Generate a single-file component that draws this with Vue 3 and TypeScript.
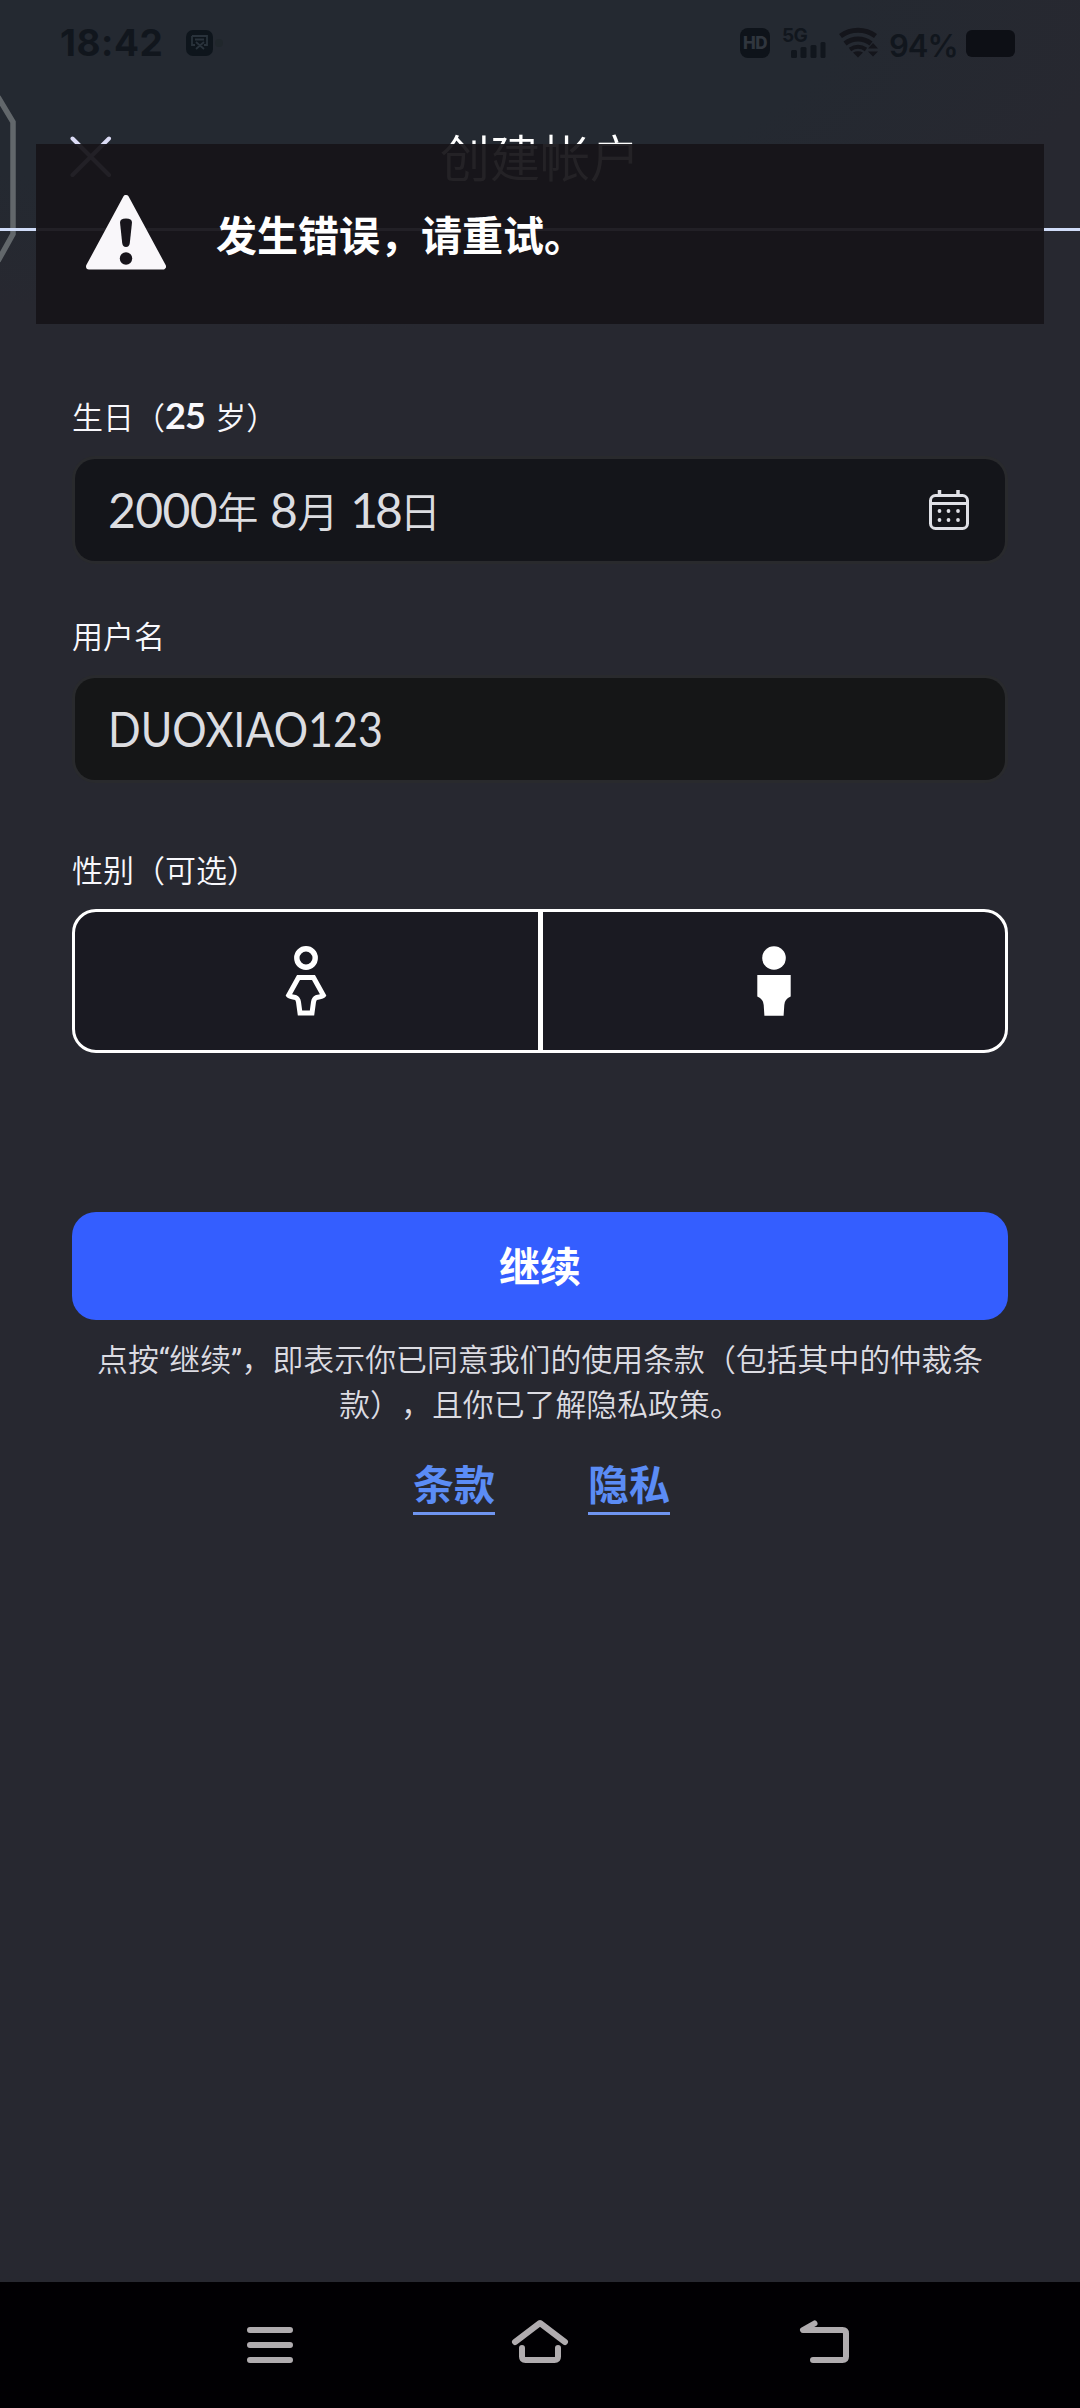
<script setup lang="ts">
import { ref } from 'vue'

type Gender = 'female' | 'male'

const username = ref('DUOXIAO123')
const age = ref(25)
const gender = ref<Gender>('male')
const links: string[] = ['条款', '隐私']
</script>

<template>
  <div class="screen">
    <div class="status">
      <span class="time">18:42</span>
      <svg class="app-badge" width="40" height="28" viewBox="0 0 40 28">
        <rect x="0" y="1" width="27" height="26" rx="7" fill="#0e151c" />
        <path d="M6 7h15v9h-3M6 7v9h3M9 10.5h9M10 20l8-7M18 20l-8-7" fill="none" stroke="#29323b" stroke-width="1.8" />
        <circle cx="33" cy="14" r="4" fill="#20272c" />
      </svg>
      <span class="spacer" />
      <span class="hd">HD</span>
      <span class="signal">
        <span class="net">5G</span>
        <svg width="36" height="16" viewBox="0 0 36 16" fill="#11161d">
          <rect x="0" y="8" width="6" height="8" rx="1.5" />
          <rect x="9.500" y="5" width="6" height="11" rx="1.5" />
          <rect x="19.500" y="3" width="6" height="13" rx="1.5" />
          <rect x="29.500" y="0" width="5" height="16" rx="1.5" />
        </svg>
      </span>
      <svg class="wifi" width="40" height="32" viewBox="0 0 40 32">
        <g fill="none" stroke="#14151b" stroke-width="5">
          <path d="M1.500 9C12 1.200 26 1.200 36.500 9" />
          <path d="M6 16.500C14 10.500 24 10.500 32 16.500" />
          <path d="M11 22.500C16 19 22 19 27 22.500" stroke-width="4" />
        </g>
        <path d="M14 25.500q5-2.500 10 0L19 30.500z" fill="#14151b" />
        <path d="M29 21.500l5-5.500 5 5.500zM29 24.500h10l-5 5z" fill="#14151b" />
      </svg>
      <span class="percent">94%</span>
      <span class="battery" />
    </div>

    <header class="header">
      <svg class="close" width="42" height="42" viewBox="0 0 42 42">
        <path d="M2.500 2.500L39 39M39 2.500L2.500 39" stroke="#dcdcf6" stroke-width="4" stroke-linecap="round" />
      </svg>
      <h1 class="title">创建帐户</h1>
    </header>

    <svg class="edge" width="18" height="170" viewBox="0 0 18 170">
      <path d="M-2 4L13 29V141L-2 168" fill="none" stroke="#62676b" stroke-width="5.500" />
    </svg>

    <main class="form">
      <div class="label">生日（<b class="age">{{ age }}</b><i class="gap" />岁）</div>
      <div class="field">
        <span class="date">
          <span class="num">2000</span>年<i class="sp" /><span class="num">8</span>月<i class="sp" /><span class="num day">18</span>日
        </span>
        <svg class="calendar" width="42" height="42" viewBox="0 0 42 42">
          <rect x="2.500" y="6.500" width="37" height="33" rx="5" fill="none" stroke="#dfe0e6" stroke-width="3" />
          <path d="M2.500 14.500h37" stroke="#dfe0e6" stroke-width="3" />
          <path d="M11.500 1v6M30 1v6" stroke="#dfe0e6" stroke-width="3.500" />
          <g fill="#dfe0e6">
            <circle cx="11.500" cy="22" r="1.900" /><circle cx="20.500" cy="22" r="1.900" /><circle cx="30" cy="22" r="1.900" />
            <circle cx="11.500" cy="31" r="1.900" /><circle cx="20.500" cy="31" r="1.900" /><circle cx="30" cy="31" r="1.900" />
          </g>
        </svg>
      </div>

      <div class="label second">用户名</div>
      <div class="field name"><span class="user">{{ username }}</span></div>

      <div class="label third">性别（可选）</div>
      <div class="genders">
        <button class="gender left" type="button" @click="gender = 'female'">
          <svg width="42" height="72" viewBox="0 0 42 72">
            <circle cx="21" cy="13" r="9.200" fill="none" stroke="#fff" stroke-width="5.400" />
            <path d="M13.500 32.500H28.500L38.500 50.500Q38 51.500 31.500 52.500Q29 53.500 28.500 57L27 68H15L13.500 57Q13 53.500 10.500 52.500Q4 51.500 3.500 50.500Z" fill="none" stroke="#fff" stroke-width="5" stroke-linejoin="miter" />
          </svg>
        </button>
        <button class="gender" type="button" @click="gender = 'male'">
          <svg width="42" height="72" viewBox="0 0 42 72" fill="#fff">
            <circle cx="21" cy="13" r="11.800" />
            <path d="M4.300 30H37.700V51.500Q31.500 54 31.300 60L30.600 70.700H11.400L10.700 60Q10.500 54 4.300 51.500Z" />
          </svg>
        </button>
      </div>

      <button class="submit" type="button">继续</button>
      <p class="terms">点按<span class="q">“</span>继续<span class="q">”</span>，即表示你已同意我们的使用条款（包括其中的仲裁条<br>款），且你已了解隐私政策。</p>
      <nav class="links">
        <a v-for="link in links" :key="link" class="link">{{ link }}</a>
      </nav>
    </main>

    <footer class="navbar">
      <svg width="60" height="60" viewBox="0 0 60 60">
        <path d="M10 15H50M10 30H50M10 45H50" stroke="#b0acaf" stroke-width="6" stroke-linecap="round" />
      </svg>
      <svg width="60" height="60" viewBox="0 0 60 60">
        <path d="M5 27L30 8L55 27M12 33V41.500Q12 45 15.500 45H44.500Q48 45 48 41.500V33" fill="none" stroke="#b0acaf" stroke-width="6" stroke-linecap="round" stroke-linejoin="round" />
      </svg>
      <svg class="back" width="60" height="60" viewBox="0 0 60 60">
        <path d="M18.500 8.500L7 15H46.500Q50 15 50 18.500V41.500Q50 45 46.500 45H17" fill="none" stroke="#b0acaf" stroke-width="6" stroke-linecap="round" stroke-linejoin="round" />
      </svg>
    </footer>

    <div class="toast" role="alert">
      <svg class="warn" width="80" height="76" viewBox="0 0 80 76">
        <path d="M40 3L77 71.500H3Z" fill="#f9f7fa" stroke="#f9f7fa" stroke-width="6" stroke-linejoin="round" />
        <path d="M34 27.500Q34 23.500 40 23.500Q46 23.500 46 27.500L43.800 48Q43.300 52 40 52Q36.700 52 36.200 48Z" fill="#17151b" />
        <circle cx="40" cy="63.500" r="6.200" fill="#17151b" />
      </svg>
      <span class="toast-text">发生错误，请重试。</span>
    </div>
  </div>
</template>

<style>
body {
  margin: 0;
  background: #272830;
}
</style>

<style scoped>
.screen {
  position: relative;
  width: 1080px;
  height: 2408px;
  overflow: hidden;
  display: flex;
  flex-direction: column;
  background: radial-gradient(ellipse 800px 330px at 30% 0, #242931 0, #242931 65%, #272830 100%), #272830;
  color: #fff;
  font-family: "Noto Sans CJK SC", "Noto Sans", sans-serif;
  text-spacing-trim: space-all;
}
.status {
  display: flex;
  align-items: center;
  height: 86px;
  box-sizing: border-box;
  padding: 0 65px 0 60px;
  color: #11161d;
  font-family: Inter, "Open Sans", sans-serif;
}
.time {
  width: 126px;
  font-size: 37px;
  font-weight: 700;
  letter-spacing: 0.5px;
  line-height: 84px;
}
.spacer { flex: 1; }
.hd {
  width: 30px;
  height: 30px;
  margin-right: 2px;
  border-radius: 8px;
  background: #0e131a;
  color: #30363e;
  font-size: 17px;
  font-weight: 800;
  line-height: 30px;
  text-align: center;
  letter-spacing: -0.5px;
}
.signal {
  display: flex;
  flex-direction: column;
  width: 46px;
  height: 30px;
  margin-left: 10px;
}
.signal svg { margin: -1px 0 0 9px; }
.net {
  height: 15px;
  font-size: 19px;
  font-weight: 700;
  line-height: 15px;
  letter-spacing: -0.7px;
}
.wifi { margin-left: 11px; }
.percent {
  width: 77px;
  margin-left: 10px;
  padding-top: 5px;
  font-size: 31px;
  font-weight: 600;
  letter-spacing: -1px;
}
.battery {
  width: 49px;
  height: 27px;
  border-radius: 6px;
  background: #0d0f15;
}
.header {
  position: relative;
  z-index: 1;
  display: flex;
  align-items: center;
  height: 142px;
  padding: 0 70px;
  border-bottom: 3px solid #d0dcf8;
}
.close { margin-bottom: 1px; }
.title {
  flex: 1;
  margin: 0 42px 5px 0;
  font-size: 50px;
  font-weight: 350;
  line-height: 60px;
  text-align: center;
  color: #fff;
}
.edge {
  position: absolute;
  left: 0;
  top: 93px;
}
.form {
  display: flex;
  flex-direction: column;
  flex: 1;
  padding: 163px 72px 0;
}
.label {
  height: 44px;
  display: flex;
  align-items: baseline;
  font-size: 31px;
  line-height: 44px;
  font-weight: 350;
  color: #f8f8fc;
}
.second { margin-top: 52px; }
.third { margin-top: 67px; }
.age {
  font-family: Lato, sans-serif;
  font-size: 36px;
  font-weight: 700;
  line-height: 40px;
  letter-spacing: -0.8px;
}
.gap { width: 10px; }
.field {
  display: flex;
  align-items: center;
  justify-content: space-between;
  height: 102px;
  margin: 21px 3px 0;
  padding: 0 35px 0 33px;
  border-radius: 20px;
  background: #14151a;
  box-shadow: 0 0 0 3px #292a2d;
  color: #dcdde1;
}
.name { background: #151617; }
.date {
  display: flex;
  align-items: baseline;
  font-size: 41.5px;
  font-weight: 350;
  line-height: 60px;
}
.num, .user {
  font-family: Lato, sans-serif;
  font-size: 48px;
  font-weight: 400;
  line-height: 50px;
}
.num { letter-spacing: -0.6px; }
.day { letter-spacing: -3.2px; }
.sp { width: 11.5px; }
.user {
  display: inline-block;
  transform: scaleX(0.895);
  transform-origin: 0 50%;
}
.genders {
  display: flex;
  height: 138px;
  margin-top: 18px;
  border: 3px solid #fff;
  border-radius: 24px;
  background: #1a1a22;
}
.gender {
  flex: 1;
  display: flex;
  align-items: center;
  justify-content: center;
  padding: 0;
  border: 0;
  background: none;
}
.left { border-right: 5px solid #fff; }
.submit {
  height: 108px;
  margin-top: 159px;
  padding: 0;
  border: 0;
  border-radius: 24px;
  background: #345eff;
  color: #fff;
  font: 700 41px/105px "Noto Sans CJK SC", sans-serif;
  padding-bottom: 3px;
}
.terms {
  height: 90px;
  margin: 15px -20px 0;
  font-size: 30.9px;
  font-weight: 350;
  line-height: 45px;
  text-align: center;
  white-space: nowrap;
  color: #dcdce2;
}
.q {
  font-family: Roboto, sans-serif;
  font-weight: 400;
  line-height: 1;
  letter-spacing: -0.5px;
}
.links {
  display: flex;
  justify-content: center;
  gap: 93px;
  margin-top: 30px;
  padding-left: 3px;
}
.link {
  height: 57px;
  border-bottom: 3px solid #6f95f0;
  color: #5b8cf5;
  font-size: 41px;
  font-weight: 700;
  line-height: 55px;
}
.navbar {
  display: flex;
  align-items: center;
  gap: 210px;
  justify-content: center;
  height: 126px;
  background: #010003;
}
.back { margin: 0 -16px 0 16px; }
.toast {
  position: absolute;
  z-index: 2;
  left: 36px;
  top: 144px;
  width: 1008px;
  height: 180px;
  box-sizing: border-box;
  display: flex;
  align-items: center;
  gap: 50px;
  padding: 0 50px;
  background: rgba(22, 20, 24, 0.94);
}
.warn { margin-bottom: 2px; }
.toast-text {
  margin-bottom: 3px;
  font-size: 41px;
  font-weight: 700;
  line-height: 60px;
}
</style>
